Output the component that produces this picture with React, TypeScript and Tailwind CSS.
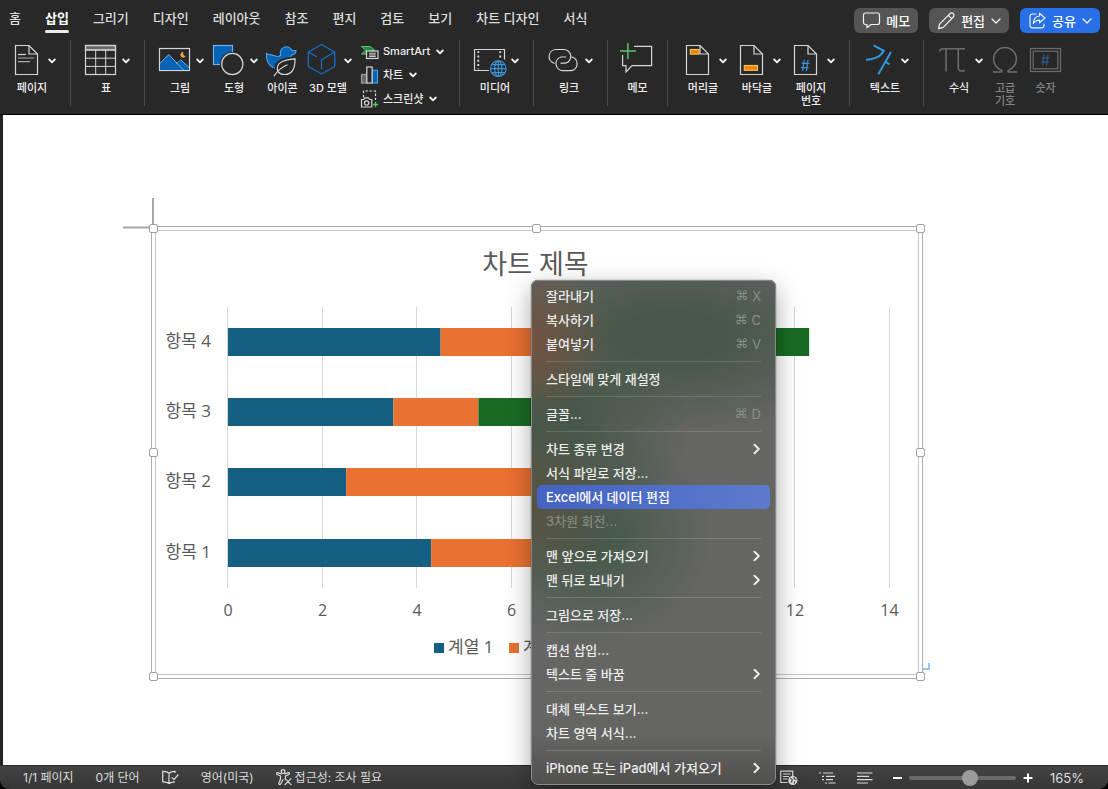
import React from "react";

type IconProps = { children: React.ReactNode; w?: number; h?: number; className?: string };

function Icon({ children, w = 31, h = 31, className = "" }: IconProps) {
  return (
    <svg
      width={w}
      height={h}
      viewBox={`0 0 ${w} ${h}`}
      fill="none"
      stroke="#d6d6d6"
      strokeWidth="1.2"
      overflow="visible"
      aria-hidden="true"
      className={`shrink-0 ${className}`}
    >
      {children}
    </svg>
  );
}

function Chevron() {
  return (
    <svg width="8" height="6" viewBox="0 0 8 6" fill="none" stroke="#f2f2f2" strokeWidth="1.8" strokeLinecap="round" strokeLinejoin="round" aria-hidden="true">
      <path d="M1.2 1.5 4 4.4 6.8 1.5" />
    </svg>
  );
}

function ThinChevron() {
  return (
    <svg width="10" height="6" viewBox="0 0 10 6" fill="none" stroke="#f2f2f2" strokeWidth="1.3" strokeLinecap="round" strokeLinejoin="round" aria-hidden="true">
      <path d="M1 1 5 5 9 1" />
    </svg>
  );
}

const DocShape = () => (
  <>
    <path d="M4.5.5H18L26.5 9v20.5h-22Z" />
    <path d="M18 .5V9h8.5" />
  </>
);

const Hash = ({ x, y, color }: { x: number; y: number; color: string }) => (
  <path
    transform={`translate(${x} ${y})`}
    stroke={color}
    strokeWidth="1.2"
    d="M3.2 0 1.6 11M7 0 5.4 11M.8 3.4h7.6M0 7.6h7.6"
  />
);

const PageIcon = () => (
  <Icon>
    <DocShape />
    <path d="M7 9.5h8" />
    <path d="M7 13h16M7 16.7h12" stroke="#a8a8a8" />
  </Icon>
);

const TableIcon = () => (
  <Icon>
    <rect x=".5" y=".5" width="30" height="4.5" fill="#6a6a6a" />
    <rect x=".5" y=".5" width="30" height="29" />
    <path d="M.5 5h30M.5 13.2h30M.5 21.4h30M10.7 5v24.5M20.7 5v24.5" strokeWidth="1" />
  </Icon>
);

const PictureIcon = () => (
  <Icon>
    <rect x=".5" y="3.5" width="30" height="22" />
    <path d="M1 18.3 9.8 9.5 19 19.2 22 14.8 30 22.6V25H1Z" fill="#0563b5" stroke="none" />
    <path d="M1 18.3 9.8 9.5 24.5 25M16.8 19.3l5-4.5 8.2 7.8" stroke="#71b1e8" strokeWidth="1" />
    <path d="M24.4 7a2.8 2.8 0 1 0 2.2 4.2A3 3 0 0 1 24.4 7Z" fill="#f0a23c" stroke="none" />
  </Icon>
);

const ShapesIcon = () => (
  <Icon>
    <rect x=".5" y=".5" width="19" height="19" fill="#0563b5" stroke="#71b1e8" />
    <circle cx="19.3" cy="19" r="12.3" fill="#282828" stroke="none" />
    <circle cx="19.3" cy="19" r="10.6" />
  </Icon>
);

const DuckIcon = () => (
  <Icon>
    <path
      d="M-.5 8.6C2 10 5 9.8 7.5 10.8c2 .9 4.600.9 6.300-.6A6 6 0 1 1 25 5.6l4 .1c-.2 2.600-1.800 4-4.400 4.200l-1.200 2.300c1.800 1.200 2.400 3 2 5-.6 3.600-4.200 6-8.400 6H9.500C3.500 23.200-.9 17.500-.5 8.600Z"
      fill="#0563b5"
      stroke="#4c9ce0"
    />
    <path d="M28 13.500C20 14.500 9.500 15 9.500 23.500c0 1.300.3 2.500.9 3.500 1.500 2 4 2.800 7 2.800 8 0 10.600-7 10.600-16.300Z" fill="#282828" stroke="#282828" strokeWidth="4" />
    <path d="M28 13.800c-8 1-17.700 2-17.700 9.700 0 1.300.3 2.300.9 3.300 1.500 2 3.800 2.700 6.500 2.700 7.500 0 10.600-6.500 10.300-15.700Z" />
    <path d="M7 31.300c3-5 7.500-9 13.500-11.500" />
  </Icon>
);

const CubeIcon = () => (
  <Icon>
    <g stroke="#1670c6" strokeWidth="1.3" strokeLinejoin="round">
      <path d="M14.500-.5 27.700 7v14.500L14.500 29 1.300 21.500V7Z" />
      <path d="M1.300 7 10 12M27.700 7 14.500 14.700v9.500" />
    </g>
  </Icon>
);

const SmartArtIcon = () => (
  <Icon w={18} h={18}>
    <path d="M.5 3.500h9l4.700 4.200H8L5 11H.5l4-3.800Z" fill="#1f8a3f" stroke="#63c97b" strokeWidth=".9" />
    <rect x="5.500" y="8" width="11.500" height="7.500" fill="#282828" />
    <path d="M8 10.200h6.800M8 12h6.800M8 13.600h6.800" strokeWidth="1" />
  </Icon>
);

const ChartIcon = () => (
  <Icon w={18} h={18}>
    <rect x=".5" y="8.500" width="5.300" height="8.500" fill="#6a6a6a" stroke="#9a9a9a" />
    <rect x="11.300" y="4.300" width="5.200" height="12.700" fill="#0563b5" stroke="#4c9ce0" />
    <rect x="5.800" y="1" width="5.300" height="16" fill="#282828" />
  </Icon>
);

const ScreenshotIcon = () => (
  <Icon w={18} h={18}>
    <path d="M2.500 7.500V1h12v9" strokeDasharray="2.600 1.600" />
    <path d="M.5 9.500h2.300l1.200-1.600h3.500l1.200 1.600h2v7.500H.5Z" fill="#282828" />
    <circle cx="5.600" cy="13" r="2.200" />
    <path d="M14.500 12v5M12 14.500h5" stroke="#5cc46f" strokeWidth="1.400" />
  </Icon>
);

const MediaIcon = () => (
  <Icon>
    <path d="M15 25.500H.5v-21h30v10" />
    <path d="M4.300 6.200v18M26.200 6.200v8" strokeWidth="1.900" strokeDasharray="1.900 2.400" />
    <circle cx="24.300" cy="23.700" r="9.500" fill="#282828" stroke="none" />
    <g stroke="#3a94dc" strokeWidth="1.200">
      <circle cx="24.300" cy="23.700" r="7.800" />
      <ellipse cx="24.300" cy="23.700" rx="3.600" ry="7.800" />
      <path d="M24.300 15.900v15.600M16.500 23.700h15.600M17.700 19.700h13.200M17.700 27.700h13.200" />
    </g>
  </Icon>
);

const LinkIcon = () => (
  <Icon>
    <path d="M6.500 18.300A7 7 0 0 1 7.500 4.500h8.200a7 6.900 0 0 1 1.800 13.600H12.500" />
    <path d="M23.500 11.900a7 7 0 0 1-.5 13.800h-8.200a7 7 0 0 1-1.800-13.700h5.200" />
  </Icon>
);

const CommentIcon = () => (
  <Icon>
    <path d="M12 1.400h17.600v19.300H10L4 27v-6.300H.6V10" />
    <path d="M5.900-2v16M-2 6h16" stroke="#5cbf6c" strokeWidth="1.500" />
  </Icon>
);

const HeaderIcon = () => (
  <Icon>
    <DocShape />
    <rect x="8.300" y="4.500" width="8.700" height="4.600" fill="#e8860c" stroke="#f8bb55" />
  </Icon>
);

const FooterIcon = () => (
  <Icon>
    <DocShape />
    <rect x="8.300" y="20.500" width="13.200" height="4.800" fill="#e8860c" stroke="#f8bb55" />
  </Icon>
);

const PageNumberIcon = () => (
  <Icon>
    <DocShape />
    <Hash x={11} y={15} color="#3a94dc" />
  </Icon>
);

const TextIcon = () => (
  <Icon>
    <g stroke="#3096e0" strokeWidth="2">
      <path d="M9.700.4 19.700 5.800C17 11.500 10 14.800 2 14.700" />
      <path d="M27 7 14.300 29.300M21 16.500l4.500 2.800" />
    </g>
  </Icon>
);

const PiIcon = () => (
  <Icon>
    <g stroke="#6c6c6c" strokeWidth="1.600">
      <path d="M1.500 6.500C2 4.500 3 3.800 5 3.800h22" />
      <path d="M8 4v22.500M20.300 4v19c0 2.800 2 3.700 6.500 2.600" />
    </g>
  </Icon>
);

const OmegaIcon = () => (
  <Icon w={26}>
    <path d="M.8 27h9v-1.500C4.500 23 1.600 19.500 1.600 14a11.400 11.400 0 0 1 22.800 0c0 5.500-2.900 9-8.200 11.500V27h9" stroke="#6c6c6c" strokeWidth="1.500" />
  </Icon>
);

const NumberIcon = () => (
  <Icon>
    <g stroke="#6c6c6c">
      <rect x=".5" y="3.500" width="30" height="23" />
      <rect x="3.200" y="6.200" width="24.600" height="17.600" />
    </g>
    <Hash x={11} y={9.5} color="#2d5b85" />
  </Icon>
);

type ToolProps = { icon: React.ReactNode; label: React.ReactNode; menu?: boolean; dim?: boolean; className?: string };

function Tool({ icon, label, menu = true, dim = false, className = "" }: ToolProps) {
  return (
    <button type="button" disabled={dim} className={`flex shrink-0 flex-col items-center gap-[6px] pt-[5px] ${className}`}>
      <span className="flex items-center gap-[6px]">
        {icon}
        {menu && <Chevron />}
      </span>
      <span className={`flex justify-center text-center text-[11px] leading-[13px] font-medium whitespace-nowrap ${menu ? "w-[45px] pr-[3px]" : "w-[31px]"} ${dim ? "text-[#858585]" : "text-[#ededed]"}`}>
        {label}
      </span>
    </button>
  );
}

function SmallTool({ icon, label }: { icon: React.ReactNode; label: string }) {
  return (
    <button type="button" className="flex items-center gap-1 text-[11px] leading-[13px] font-medium whitespace-nowrap text-[#ededed]">
      {icon}
      {label}
      <span className="pl-[2px]">
        <Chevron />
      </span>
    </button>
  );
}

function Group({ children, last = false }: { children: React.ReactNode; last?: boolean }) {
  return (
    <div className="flex shrink-0 items-start">
      <div className="flex items-start gap-[9px] px-[14px]">{children}</div>
      {!last && <span className="h-[66px] w-px bg-[#4c4c4c]" />}
    </div>
  );
}

const tabs = ["홈", "삽입", "그리기", "디자인", "레이아웃", "참조", "편지", "검토", "보기", "차트 디자인", "서식"];

function Ribbon() {
  return (
    <header className="border-b border-black bg-[#282828]">
      <div className="flex h-10 items-start justify-between pr-2 pl-[9px]">
        <nav className="flex gap-6 pt-2">
          {tabs.map((tab) => {
            const active = tab === "삽입";
            return (
              <button
                key={tab}
                type="button"
                className={`flex flex-col gap-[2px] text-[13px] leading-5 whitespace-nowrap ${active ? "font-bold text-white" : "font-medium text-[#dedede]"}`}
              >
                {tab}
                {active && <span className="h-[3px] w-full rounded-full bg-[#ededed]" />}
              </button>
            );
          })}
        </nav>
        <div className="flex gap-[11px] pt-2 text-[13px] leading-5 font-medium text-white">
          <button type="button" className="flex h-[25px] items-center gap-1 rounded-md bg-[#555555] px-2">
            <svg width="20" height="17" viewBox="0 0 20 17" fill="none" stroke="#f2f2f2" strokeWidth="1.200" strokeLinejoin="round" aria-hidden="true">
              <path d="M3.500 1h12A2 2 0 0 1 17.500 3v7.500a2 2 0 0 1-2 2H9L5 15.800v-3.300H3.500a2 2 0 0 1-2-2V3a2 2 0 0 1 2-2Z" />
            </svg>
            메모
          </button>
          <button type="button" className="flex h-[25px] items-center gap-1 rounded-md bg-[#555555] px-2">
            <svg width="20" height="18" viewBox="0 0 20 18" fill="none" stroke="#f2f2f2" strokeWidth="1.200" strokeLinejoin="round" aria-hidden="true">
              <path d="m1.500 16.700 1.200-4.800L13 1.700a2.200 2.200 0 0 1 3.300 0 2.200 2.200 0 0 1 0 3.300L6.300 15.300Z" />
              <path d="m11.300 3.400 3.300 3.300" />
            </svg>
            편집
            <span className="pl-[2px]"><ThinChevron /></span>
          </button>
          <button type="button" className="flex h-[25px] items-center gap-1 rounded-md bg-[#2870e8] px-2">
            <svg width="20" height="17" viewBox="0 0 20 17" fill="none" stroke="#f2f2f2" strokeWidth="1.200" strokeLinejoin="round" strokeLinecap="round" aria-hidden="true">
              <path d="M8 2H4.500A2.500 2.500 0 0 0 2 4.500v8.800a2.500 2.500 0 0 0 2.500 2.500h9a2.500 2.500 0 0 0 2.500-2.500V12" />
              <path d="M11.500 1.200 17 6l-5.500 4.800V8.200C8.500 8.200 6.800 9.300 5.300 11.500 5.600 7.300 8 4.300 11.500 4Z" />
            </svg>
            공유
            <span className="pl-[2px]"><ThinChevron /></span>
          </button>
        </div>
      </div>

      <div className="-ml-[3px] flex h-[74px] items-start">
        <Group>
          <Tool icon={<PageIcon />} label="페이지" />
        </Group>
        <Group>
          <Tool icon={<TableIcon />} label="표" />
        </Group>
        <Group>
          <Tool icon={<PictureIcon />} label="그림" />
          <Tool icon={<ShapesIcon />} label="도형" />
          <Tool icon={<DuckIcon />} label="아이콘" menu={false} />
          <Tool icon={<CubeIcon />} label="3D 모델" />
          <div className="grid h-[71px] w-[84px] grid-rows-3">
            <SmallTool icon={<SmartArtIcon />} label="SmartArt" />
            <SmallTool icon={<ChartIcon />} label="차트" />
            <SmallTool icon={<ScreenshotIcon />} label="스크린샷" />
          </div>
        </Group>
        <Group>
          <Tool icon={<MediaIcon />} label="미디어" />
        </Group>
        <Group>
          <Tool icon={<LinkIcon />} label="링크" />
        </Group>
        <Group>
          <Tool icon={<CommentIcon />} label="메모" menu={false} />
        </Group>
        <Group>
          <Tool icon={<HeaderIcon />} label="머리글" />
          <Tool icon={<FooterIcon />} label="바닥글" />
          <Tool icon={<PageNumberIcon />} label={<>페이지<br />번호</>} />
        </Group>
        <Group>
          <Tool icon={<TextIcon />} label="텍스트" />
        </Group>
        <Group last>
          <Tool icon={<PiIcon />} label="수식" />
          <Tool icon={<OmegaIcon />} label={<>고급<br />기호</>} menu={false} dim className="w-[26px]" />
          <Tool icon={<NumberIcon />} label="숫자" menu={false} dim className="w-[37px]" />
        </Group>
      </div>
    </header>
  );
}

const ORIGIN = 228;
const UNIT = 47.25;
const seriesColors = ["#156082", "#e97132", "#196b24"];
const rows = [
  { name: "항목 4", y: 328, values: [4.5, 2.8, 5] },
  { name: "항목 3", y: 398, values: [3.5, 1.8, 3] },
  { name: "항목 2", y: 468, values: [2.5, 4.4, 2] },
  { name: "항목 1", y: 539, values: [4.3, 2.4, 2] },
];
const gridValues = [0, 2, 4, 6, 8, 10, 12, 14];
const axisLabels = [0, 2, 4, 6, 12, 14];
const legend = ["계열 1", "계"];
const handles = [
  [153.5, 228.5], [536.5, 228.5], [920.5, 228.5],
  [153.5, 452.5], [920.5, 452.5],
  [153.5, 676.5], [536.5, 676.5], [920.5, 676.5],
];

function Chart() {
  return (
    <svg
      width="815"
      height="490"
      viewBox="120 195 815 490"
      role="img"
      aria-label="차트 제목"
      className="shrink-0 [font-family:'Open_Sans','Noto_Sans_CJK_KR',sans-serif]"
    >
      <g fill="none">
        <path d="M153 198v27M123 227.500h27" stroke="#a6a6a6" strokeWidth="2" />
        <rect x="151.500" y="226.500" width="771" height="452" stroke="#adadad" />
        <rect x="155.500" y="230.500" width="763" height="444" stroke="#c6c6c6" />
        <path d="M923 669h6v-6" stroke="#74b4ee" strokeWidth="1.500" />
      </g>
      {gridValues.map((t) => (
        <path key={t} d={`M${Math.round(ORIGIN + t * UNIT) - 0.5} 307V588`} stroke="#d9d9d9" />
      ))}
      {axisLabels.map((t) => (
        <text key={t} x={ORIGIN + t * UNIT} y="616" textAnchor="middle" fontSize="16" fill="#595959">{t}</text>
      ))}
      {rows.map((row) => {
        let total = 0;
        return (
          <g key={row.name}>
            <text x="211" y={row.y + 19} textAnchor="end" fontSize="17" fill="#595959">{row.name}</text>
            {row.values.map((v, i) => {
              const x = ORIGIN + total * UNIT;
              total += v;
              return <rect key={i} x={x} y={row.y} width={v * UNIT} height="28" fill={seriesColors[i]} />;
            })}
          </g>
        );
      })}
      <text x="535.500" y="274" textAnchor="middle" fontSize="27" fill="#595959">차트 제목</text>
      {legend.map((name, i) => (
        <g key={name}>
          <rect x={434 + i * 75} y="643" width="10" height="10" fill={seriesColors[i]} />
          <text x={448 + i * 75} y="653" fontSize="17" fill="#595959">{name}</text>
        </g>
      ))}
      {handles.map(([x, y]) => (
        <rect key={`${x}-${y}`} x={x - 4} y={y - 4} width="8" height="8" rx="1.500" fill="#fff" stroke="#a0a0a0" />
      ))}
    </svg>
  );
}

type Entry = { label: string; keys?: string; sub?: boolean; state?: "active" | "off" };
const menu: Entry[][] = [
  [{ label: "잘라내기", keys: "X" }, { label: "복사하기", keys: "C" }, { label: "붙여넣기", keys: "V" }],
  [{ label: "스타일에 맞게 재설정" }],
  [{ label: "글꼴...", keys: "D" }],
  [
    { label: "차트 종류 변경", sub: true },
    { label: "서식 파일로 저장..." },
    { label: "Excel에서 데이터 편집", state: "active" },
    { label: "3차원 회전...", state: "off" },
  ],
  [{ label: "맨 앞으로 가져오기", sub: true }, { label: "맨 뒤로 보내기", sub: true }],
  [{ label: "그림으로 저장..." }],
  [{ label: "캡션 삽입..." }, { label: "텍스트 줄 바꿈", sub: true }],
  [{ label: "대체 텍스트 보기..." }, { label: "차트 영역 서식..." }],
  [{ label: "iPhone 또는 iPad에서 가져오기", sub: true }],
];

const menuStates = {
  normal: "text-[#ececec]",
  active: "bg-linear-to-r from-[#4463c2] to-[#5d7acd] text-white",
  off: "text-[#878783]",
};

function ContextMenu() {
  return (
    <div
      role="menu"
      className="absolute top-[280px] left-[531px] w-[245px] rounded-[7px] border border-[#8a8a88] bg-[#656564] bg-[radial-gradient(ellipse_80px_80px_at_0px_60px,#735240,transparent),radial-gradient(ellipse_90px_90px_at_0px_225px,#575240,transparent),radial-gradient(ellipse_210px_95px_at_140px_55px,#47584a_25%,transparent),radial-gradient(ellipse_140px_110px_at_20px_140px,#47584a_20%,transparent),radial-gradient(ellipse_120px_110px_at_60px_255px,#465a4b_15%,transparent),linear-gradient(to_bottom,transparent_90%,#50504f)] px-[5px] pt-[3px] pb-1 shadow-[0_0_1px_#000,0_8px_24px_rgba(0,0,0,0.35)]"
    >
      {menu.map((section, s) => (
        <div key={s} role="group">
          {s > 0 && <div role="separator" className="mx-[9px] my-[5px] h-px bg-white/15" />}
          {section.map((item) => (
            <button
              key={item.label}
              type="button"
              role="menuitem"
              disabled={item.state === "off"}
              className={`flex h-6 w-full items-center justify-between rounded-[5px] px-[9px] text-[13px] leading-5 font-medium whitespace-nowrap ${menuStates[item.state ?? "normal"]}`}
            >
              {item.label}
              {item.keys && (
                <span className="flex gap-1 font-normal text-[#87908a]">
                  <span className="[font-family:'DejaVu_Sans',sans-serif]">⌘</span>
                  <span>{item.keys}</span>
                </span>
              )}
              {item.sub && (
                <svg width="8" height="12" viewBox="0 0 8 12" fill="none" stroke="#ececec" strokeWidth="2" strokeLinecap="round" strokeLinejoin="round" aria-hidden="true">
                  <path d="M1.500 1.800 5.800 6 1.500 10.200" />
                </svg>
              )}
            </button>
          ))}
        </div>
      ))}
    </div>
  );
}

function StatusBar() {
  return (
    <footer className="flex h-6 items-center justify-between border-t border-[#2a2a2a] bg-linear-to-b from-[#434343] to-[#363636] pr-6 pl-[23px] text-[12px] leading-4 whitespace-nowrap text-[#dcdcdc]">
      <div className="flex items-center gap-[22px]">
        <span>1/1 페이지</span>
        <span>0개 단어</span>
        <button type="button" aria-label="맞춤법 검사">
          <svg width="17" height="15" viewBox="0 0 17 15" fill="none" stroke="#dcdcdc" strokeWidth="1.200" aria-hidden="true">
            <path d="M7 3C5 1.300 3 1.200.7 1.300v10.500c2.300-.1 4.300 0 6.300 1.700 1.500-1.300 3-1.700 6-1.700M7 3v10.500M7 3c1.500-1.300 3.300-1.700 6-1.700V3" />
            <path d="m9.800 7.300 2.200 2.300L16.300 4.500" />
          </svg>
        </button>
        <span>영어(미국)</span>
        <button type="button" className="flex items-center gap-[3px]">
          <svg width="16" height="17" viewBox="0 0 16 17" fill="none" stroke="#dcdcdc" strokeWidth="1.200" strokeLinejoin="round" strokeLinecap="round" aria-hidden="true">
            <circle cx="7" cy="2.600" r="1.900" />
            <path d="M5.200 5 1.700 3.600C.3 3.400.2 5 1.200 5.500L4.500 7v3l-1.700 4.300c-.3 1.300 1.300 1.700 1.800.7L7 10.700M8.800 5l3.500-1.400c1.400-.2 1.500 1.400.5 1.900L9.500 7v2" />
            <path d="m9 9.700 6 6M15 9.700l-6 6" />
          </svg>
          접근성: 조사 필요
        </button>
      </div>
      <div className="flex items-center">
        <div className="flex items-center gap-[21px]">
          <button type="button" aria-label="웹 레이아웃">
            <svg width="18" height="16" viewBox="0 0 18 16" fill="none" stroke="#dcdcdc" strokeWidth="1.200" aria-hidden="true">
              <path d="M7.500 12.500H.7V1.200h12V6M3 4h7.500M3 6.500h6M3 9h4.500" />
              <circle cx="12.800" cy="10.500" r="4.600" fill="#dcdcdc" stroke="none" />
              <path d="M10.200 8.500c1.500.2 2.300.8 2 2-.3.800-1 .8-.8 2M14 7l.4 1.800 2 .8M14 13.500l1-2" stroke="#3c3c3c" strokeWidth="1.100" />
            </svg>
          </button>
          <button type="button" aria-label="개요">
            <svg width="17" height="12" viewBox="0 0 17 12" fill="none" stroke="#dcdcdc" strokeWidth="1.200" aria-hidden="true">
              <path d="M0 1h2M4 1h10M3 4.300h2M7 4.300h9M3 7.600h2M7 7.600h7M6 11h2M9.500 11h7" />
            </svg>
          </button>
          <button type="button" aria-label="초안">
            <svg width="16" height="12" viewBox="0 0 16 12" fill="none" stroke="#dcdcdc" strokeWidth="1.200" aria-hidden="true">
              <path d="M0 1h15.500M0 4.300h12M0 7.600h15.500M0 11h11" />
            </svg>
          </button>
        </div>
        <button type="button" aria-label="축소" className="ml-5 h-[2px] w-[9px] bg-white" />
        <input
          type="range"
          aria-label="확대/축소"
          min={0}
          max={100}
          defaultValue={58}
          className="mx-[7px] h-4 w-[107px] appearance-none bg-transparent [&::-webkit-slider-runnable-track]:h-1 [&::-webkit-slider-runnable-track]:rounded-full [&::-webkit-slider-runnable-track]:bg-[#6a6a6a] [&::-webkit-slider-thumb]:-mt-[6px] [&::-webkit-slider-thumb]:size-4 [&::-webkit-slider-thumb]:appearance-none [&::-webkit-slider-thumb]:rounded-full [&::-webkit-slider-thumb]:bg-[#9c9c9c]"
        />
        <button type="button" aria-label="확대">
          <svg width="10" height="10" viewBox="0 0 10 10" stroke="#fff" strokeWidth="2" aria-hidden="true">
            <path d="M5 .5v9M.5 5h9" />
          </svg>
        </button>
        <span className="ml-[17px] text-[13px]">165%</span>
      </div>
    </footer>
  );
}

export default function App() {
  return (
    <div className="min-h-screen bg-black [font-family:Inter,'Noto_Sans_CJK_KR',sans-serif]">
      <div className="relative flex min-h-screen flex-col overflow-hidden rounded-b-[9px]">
        <Ribbon />
        <main className="flex flex-1 border-l-[3px] border-[#232323] bg-white pt-20 pl-[117px]">
          <Chart />
        </main>
        <StatusBar />
        <ContextMenu />
      </div>
    </div>
  );
}
